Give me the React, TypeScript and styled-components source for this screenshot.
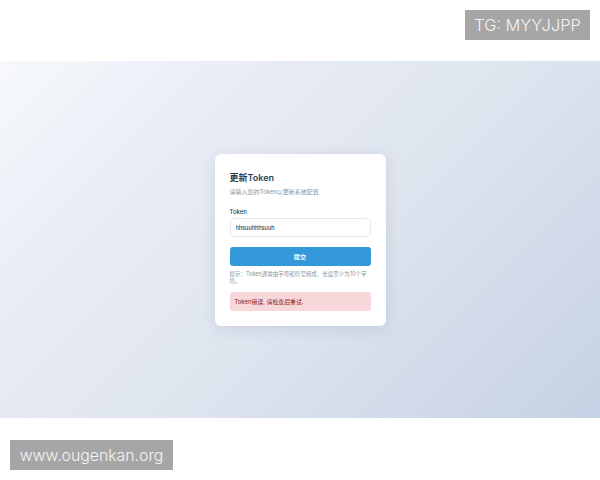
import React from "react";
import styled, { createGlobalStyle } from "styled-components";

const GlobalStyle = createGlobalStyle`
  html, body {
    margin: 0;
    padding: 0;
    background: #fff;
  }
  body {
    font-family: "Inter", "Noto Sans CJK SC", sans-serif;
  }
`;

export default function App() {
  return (
    <>
      <GlobalStyle />
      <Page>
        <Stage>
          <Card>
            <Title>更新Token</Title>
            <Subtitle>请输入您的Token以更新系统配置</Subtitle>
            <Label htmlFor="token">Token</Label>
            <TokenInput id="token" defaultValue="hhsuuhhhsuuh" />
            <SubmitButton type="button">提交</SubmitButton>
            <Hint>提示：Token通常由字母和符号组成，长度至少为10个字符。</Hint>
            <ErrorBox>Token错误, 请检查后重试.</ErrorBox>
          </Card>
        </Stage>
        <Watermark $corner="top">TG: MYYJJPP</Watermark>
        <Watermark $corner="bottom">www.ougenkan.org</Watermark>
      </Page>
    </>
  );
}

const Page = styled.div`
  position: relative;
  width: 600px;
  height: 480px;
  padding: 61px 0 62px;
  box-sizing: border-box;
  overflow: hidden;
  background: #fff;
`;

const Stage = styled.main`
  height: 357px;
  display: flex;
  align-items: center;
  justify-content: center;
  background: linear-gradient(135deg, #f7f9fb 0%, #e7ecf6 27%, #dfe5ef 55%, #c5d1e4 100%);
`;

const Card = styled.section`
  width: 171px;
  height: 172px;
  box-sizing: border-box;
  margin-top: 1px;
  padding: 17px 15px 0;
  display: flex;
  flex-direction: column;
  background: #fff;
  border-radius: 6px;
  box-shadow: 0 3px 14px rgba(90, 105, 135, 0.17);
`;

const Title = styled.h1`
  margin: 0;
  font-size: 9px;
  line-height: 13px;
  font-weight: 600;
  color: #2c3e50;
`;

const Subtitle = styled.p`
  margin: 3px 0 0;
  font-size: 6px;
  line-height: 9px;
  color: #8a949e;
`;

const Label = styled.label`
  margin-top: 12px;
  font-size: 6px;
  line-height: 8px;
  font-weight: 500;
  color: #2c3e50;
`;

const TokenInput = styled.input`
  margin-top: 2px;
  height: 19px;
  box-sizing: border-box;
  padding: 0 5px;
  border: 1px solid #e6e9ed;
  border-radius: 4px;
  outline: none;
  background: #fff;
  font-family: inherit;
  font-size: 5.5px;
  font-weight: 500;
  color: #2c3e50;
`;

const SubmitButton = styled.button`
  margin-top: 10px;
  height: 19px;
  padding: 0;
  border: none;
  border-radius: 3px;
  background: #3498db;
  color: #fff;
  font-family: inherit;
  font-size: 6.2px;
  font-weight: 600;
`;

const Hint = styled.p`
  margin: 5px 0 0;
  font-size: 5.5px;
  line-height: 7px;
  color: #8a949e;
`;

const ErrorBox = styled.div`
  margin-top: 7px;
  height: 19px;
  display: flex;
  align-items: center;
  padding: 0 5px;
  border-radius: 3px;
  background: #f8d7da;
  font-size: 5.9px;
  color: #842029;
`;

const Watermark = styled.div<{ $corner: "top" | "bottom" }>`
  position: absolute;
  height: 30px;
  box-sizing: border-box;
  display: flex;
  align-items: center;
  justify-content: center;
  background: #a6a6a6;
  color: #f4f4f4;
  font-family: "Inter", "Liberation Sans", sans-serif;
  font-weight: 300;
  font-size: ${(p) => (p.$corner === "top" ? "16.4px" : "15.8px")};
  ${(p) =>
    p.$corner === "top"
      ? "top: 10px; right: 10px; width: 125px;"
      : "bottom: 10px; left: 10px; width: 163px;"}
`;
